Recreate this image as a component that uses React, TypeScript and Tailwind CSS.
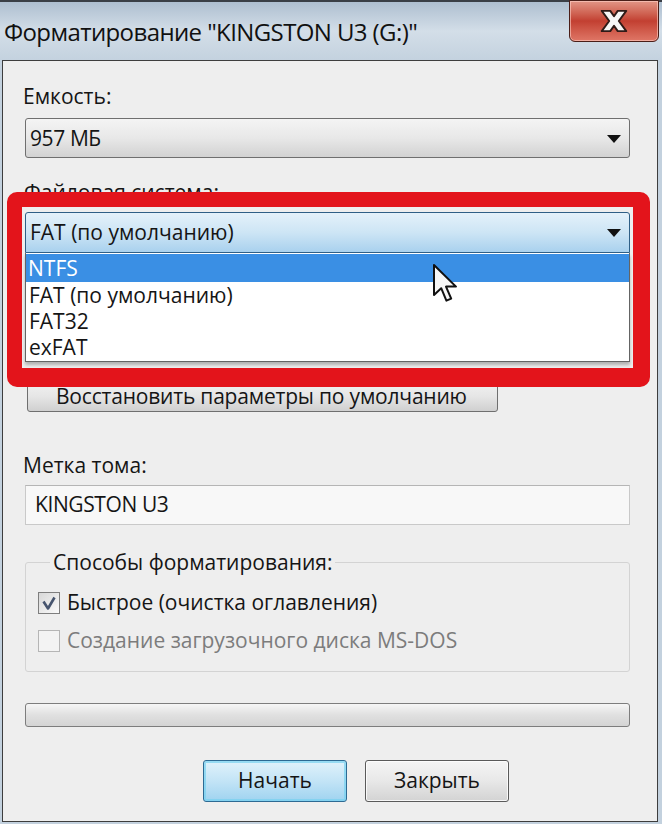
import React from "react";

const Tri = () => (
  <svg width="14" height="8" viewBox="0 0 14 8" className="shrink-0">
    <path d="M0 0 L14 0 L7 8 Z" fill="#111" />
  </svg>
);

export default function App() {
  return (
    <div className="relative w-[662px] h-[824px] overflow-hidden flex flex-col bg-[#c3d1de] font-['Open_Sans',sans-serif] text-[#151515]">
      {/* Title bar */}
      <div className="h-[60px] shrink-0 flex items-start border-t-[2px] border-[#3a3f46] bg-gradient-to-b from-[#aebfd0] via-[#d3dee8] to-[#c4d2df]">
        <div className="pt-[14px] pl-[4px] text-[24px] leading-[32px] text-[#111] tracking-[-0.6px]">
          Форматирование "KINGSTON U3 (G:)"
        </div>
        <div className="ml-auto mr-[3px] mt-[-2px] w-[90px] h-[42px] rounded-b-[6px] border border-[#4a1e18] bg-gradient-to-b from-[#e19586] via-[#c23f31] to-[#df7666] flex items-center justify-center shadow-[inset_0_0_0_1px_rgba(255,210,200,0.6)]">
          <svg width="32" height="26" viewBox="0 0 30 24">
            <path
              d="M3.5 2.5 L11.5 2.5 L15 7.5 L18.5 2.5 L26.5 2.5 L19.5 12 L26.5 21.5 L18.5 21.5 L15 16.5 L11.5 21.5 L3.5 21.5 L10.5 12 Z"
              fill="#f6f6f6"
              stroke="#2e1a17"
              strokeWidth="1.8"
              strokeLinejoin="round"
            />
          </svg>
        </div>
      </div>

      {/* Client area */}
      <div className="flex-1 ml-[2px] mr-[4px] mb-[2px] border border-[#3d3d3d] bg-[#eeeeee] pl-[22px] pr-[27px] flex flex-col text-[21px]">
        <div className="mt-[22px] h-[26px] leading-[26px] ml-[-2px]">Емкость:</div>
        <div className="mt-[9px] h-[40px] rounded-[3px] border border-[#6f6f6f] bg-gradient-to-b from-[#f4f4f4] via-[#e8e8e8] to-[#d2d2d2] flex items-center pl-[4px] pr-[8px] pt-[2px]">
          <span className="flex-1 tracking-[-0.4px]">957 МБ</span>
          <Tri />
        </div>

        <div className="mt-[21px] h-[26px] leading-[26px] ml-[-1px]">Файловая система:</div>
        <div className="mt-[7px] h-[41px] rounded-t-[3px] border border-[#2f5f86] bg-gradient-to-b from-[#e4f1fa] via-[#cde5f5] to-[#a9d1ee] flex items-center pl-[4px] pr-[8px]">
          <span className="flex-1">FAT (по умолчанию)</span>
          <Tri />
        </div>
        <div className="h-[109px] border-x border-b border-[#646464] bg-white pt-[1px] shadow-[0_3px_3px_rgba(0,0,0,0.25)]">
          <div className="h-[28px] leading-[28px] bg-[#3a8fe4] text-white pl-[2px]">NTFS</div>
          <div className="h-[26px] leading-[26px] pl-[3px]">FAT (по умолчанию)</div>
          <div className="h-[26px] leading-[26px] pl-[3px]">FAT32</div>
          <div className="h-[26px] leading-[26px] pl-[3px]">exFAT</div>
        </div>

        <div className="mt-[18px] ml-[2px] w-[471px] h-[32px] rounded-[3px] border border-[#6f6f6f] bg-gradient-to-b from-[#f2f2f2] via-[#e6e6e6] to-[#d0d0d0] flex items-center pl-[28px] leading-[26px] tracking-[-0.2px]">
          Восстановить параметры по умолчанию
        </div>

        <div className="mt-[40px] h-[26px] leading-[26px] ml-[-2px]">Метка тома:</div>
        <div className="mt-[7px] h-[40px] border border-[#c9c9c9] border-t-[#b5b5b5] bg-[#f8f8f8] flex items-center pl-[9px] tracking-[-0.4px]">
          KINGSTON U3
        </div>

        <fieldset className="mt-[27px] h-[120px] border border-[#d3d3d3] rounded-[3px] pl-[12px] pb-[18px]">
          <legend className="ml-[12px] px-[3px] leading-[20px]">Способы форматирования:</legend>
          <div className="mt-[18px] h-[26px] flex items-center gap-[7px]">
            <div className="w-[22px] h-[22px] border border-[#7e7e7e] bg-gradient-to-br from-[#d8d8d8] to-[#fafafa] flex items-center justify-center">
              <svg width="16" height="16" viewBox="0 0 16 16">
                <path d="M2.5 6.5 L7 13.5 L13.5 2.5" fill="none" stroke="#46546e" strokeWidth="2.6" strokeLinejoin="round" />
              </svg>
            </div>
            <span>Быстрое (очистка оглавления)</span>
          </div>
          <div className="mt-[12px] h-[26px] flex items-center gap-[7px] text-[#7c7c7c]">
            <div className="w-[22px] h-[22px] border border-[#b5b5b5] bg-[#f3f3f3]" />
            <span>Создание загрузочного диска MS-DOS</span>
          </div>
        </fieldset>

        <div className="mt-[31px] h-[24px] rounded-[3px] border border-[#7d7d7d] bg-gradient-to-b from-[#f6f6f6] via-[#e0e0e0] to-[#d4d4d4]" />

        <div className="mt-[33px] ml-[178px] flex gap-[18px]">
          <div className="w-[144px] h-[42px] rounded-[3px] border border-[#2d6a93] bg-gradient-to-b from-[#e1f2fb] via-[#c3e4f6] to-[#9fd3f0] shadow-[inset_0_0_0_2px_rgba(120,210,240,0.7)] flex items-center justify-center">
            Начать
          </div>
          <div className="w-[144px] h-[42px] rounded-[3px] border border-[#5a5a5a] bg-gradient-to-b from-[#f5f5f5] via-[#e8e8e8] to-[#d3d3d3] shadow-[inset_0_0_0_1px_rgba(255,255,255,0.8)] flex items-center justify-center">
            Закрыть
          </div>
        </div>
      </div>

      {/* Red highlight frame */}
      <div className="absolute left-[7px] top-[192px] w-[643px] h-[195px] rounded-[10px] border-t-[15px] border-l-[15px] border-r-[17px] border-b-[19px] border-[#e3141b]" />

      {/* Mouse cursor */}
      <svg className="absolute left-[432px] top-[263px]" width="28" height="42" viewBox="0 0 14 21">
        <path
          d="M1 1 L1 16 L4.6 12.6 L7.2 18.8 L9.6 17.8 L7 11.8 L12 11.8 Z"
          fill="#f7f7f7"
          stroke="#111"
          strokeWidth="1"
          strokeLinejoin="round"
        />
      </svg>
    </div>
  );
}
